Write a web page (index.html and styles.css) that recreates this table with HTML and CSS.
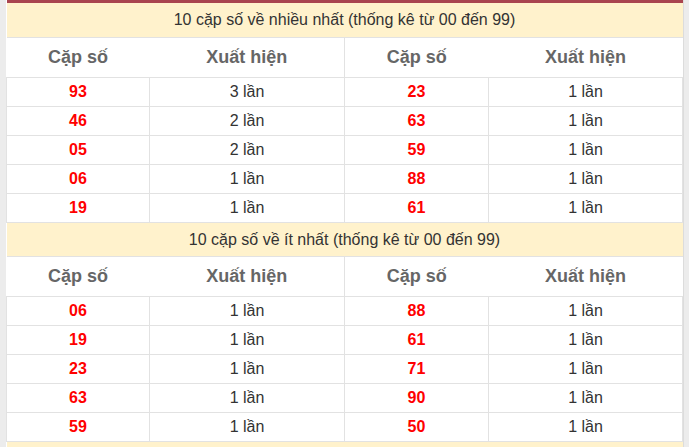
FILE: index.html
```html
<!DOCTYPE html>
<html lang="vi">
<head>
<meta charset="utf-8">
<title>Thống kê cặp số</title>
<link rel="stylesheet" href="styles.css">
</head>
<body>
<div class="wrap">
<table class="stats">
  <colgroup>
    <col class="c1"><col class="c2"><col class="c3"><col class="c4">
  </colgroup>
  <tbody>
    <tr class="title"><td colspan="4">10 cặp số về nhiều nhất (thống kê từ 00 đến 99)</td></tr>
    <tr class="head"><th>Cặp số</th><th class="mid">Xuất hiện</th><th>Cặp số</th><th>Xuất hiện</th></tr>
    <tr><td class="num">93</td><td>3 lần</td><td class="num">23</td><td>1 lần</td></tr>
    <tr><td class="num">46</td><td>2 lần</td><td class="num">63</td><td>1 lần</td></tr>
    <tr><td class="num">05</td><td>2 lần</td><td class="num">59</td><td>1 lần</td></tr>
    <tr><td class="num">06</td><td>1 lần</td><td class="num">88</td><td>1 lần</td></tr>
    <tr><td class="num">19</td><td>1 lần</td><td class="num">61</td><td>1 lần</td></tr>
    <tr class="title"><td colspan="4">10 cặp số về ít nhất (thống kê từ 00 đến 99)</td></tr>
    <tr class="head"><th>Cặp số</th><th class="mid">Xuất hiện</th><th>Cặp số</th><th>Xuất hiện</th></tr>
    <tr><td class="num">06</td><td>1 lần</td><td class="num">88</td><td>1 lần</td></tr>
    <tr><td class="num">19</td><td>1 lần</td><td class="num">61</td><td>1 lần</td></tr>
    <tr><td class="num">23</td><td>1 lần</td><td class="num">71</td><td>1 lần</td></tr>
    <tr><td class="num">63</td><td>1 lần</td><td class="num">90</td><td>1 lần</td></tr>
    <tr><td class="num">59</td><td>1 lần</td><td class="num">50</td><td>1 lần</td></tr>
    <tr class="title"><td colspan="4">&nbsp;</td></tr>
  </tbody>
</table>
</div>
</body>
</html>
```
FILE: styles.css
```css
html, body {
  margin: 0;
  padding: 0;
  background: #ececec;
}
body {
  padding-left: 6px;
  font-family: "Liberation Sans", Arial, sans-serif;
  overflow: hidden;
}
.wrap {
  width: 677px;
  background: #fff;
  border-right: 1px solid #dcdcdc;
}
.stats {
  width: 676px;
  table-layout: fixed;
  border-collapse: collapse;
  border-top: 3px solid #a9444f;
}
.c1 { width: 143px; }
.c2 { width: 195px; }
.c3 { width: 144px; }
.c4 { width: 194px; }
.stats td, .stats th {
  padding: 0;
  text-align: center;
  border: 1px solid #e2e2e2;
}
.stats td {
  height: 28px;
  font-size: 16px;
  color: #333;
}
.stats td.num {
  color: #ff0000;
  font-weight: bold;
}
.stats tr.title td {
  height: 33px;
  background: #fff2cc;
  color: #333;
  border-left: none;
  border-right: none;
  border-top: 1px solid #e6e6e6;
}
.stats tr:first-child.title td {
  border-top: none;
  height: 34px;
}
.stats th {
  height: 39px;
  font-size: 18px;
  font-weight: bold;
  color: #666;
  border-left: none;
  border-right: none;
}
.stats th.mid {
  border-right: 1px solid #e2e2e2;
}
```
